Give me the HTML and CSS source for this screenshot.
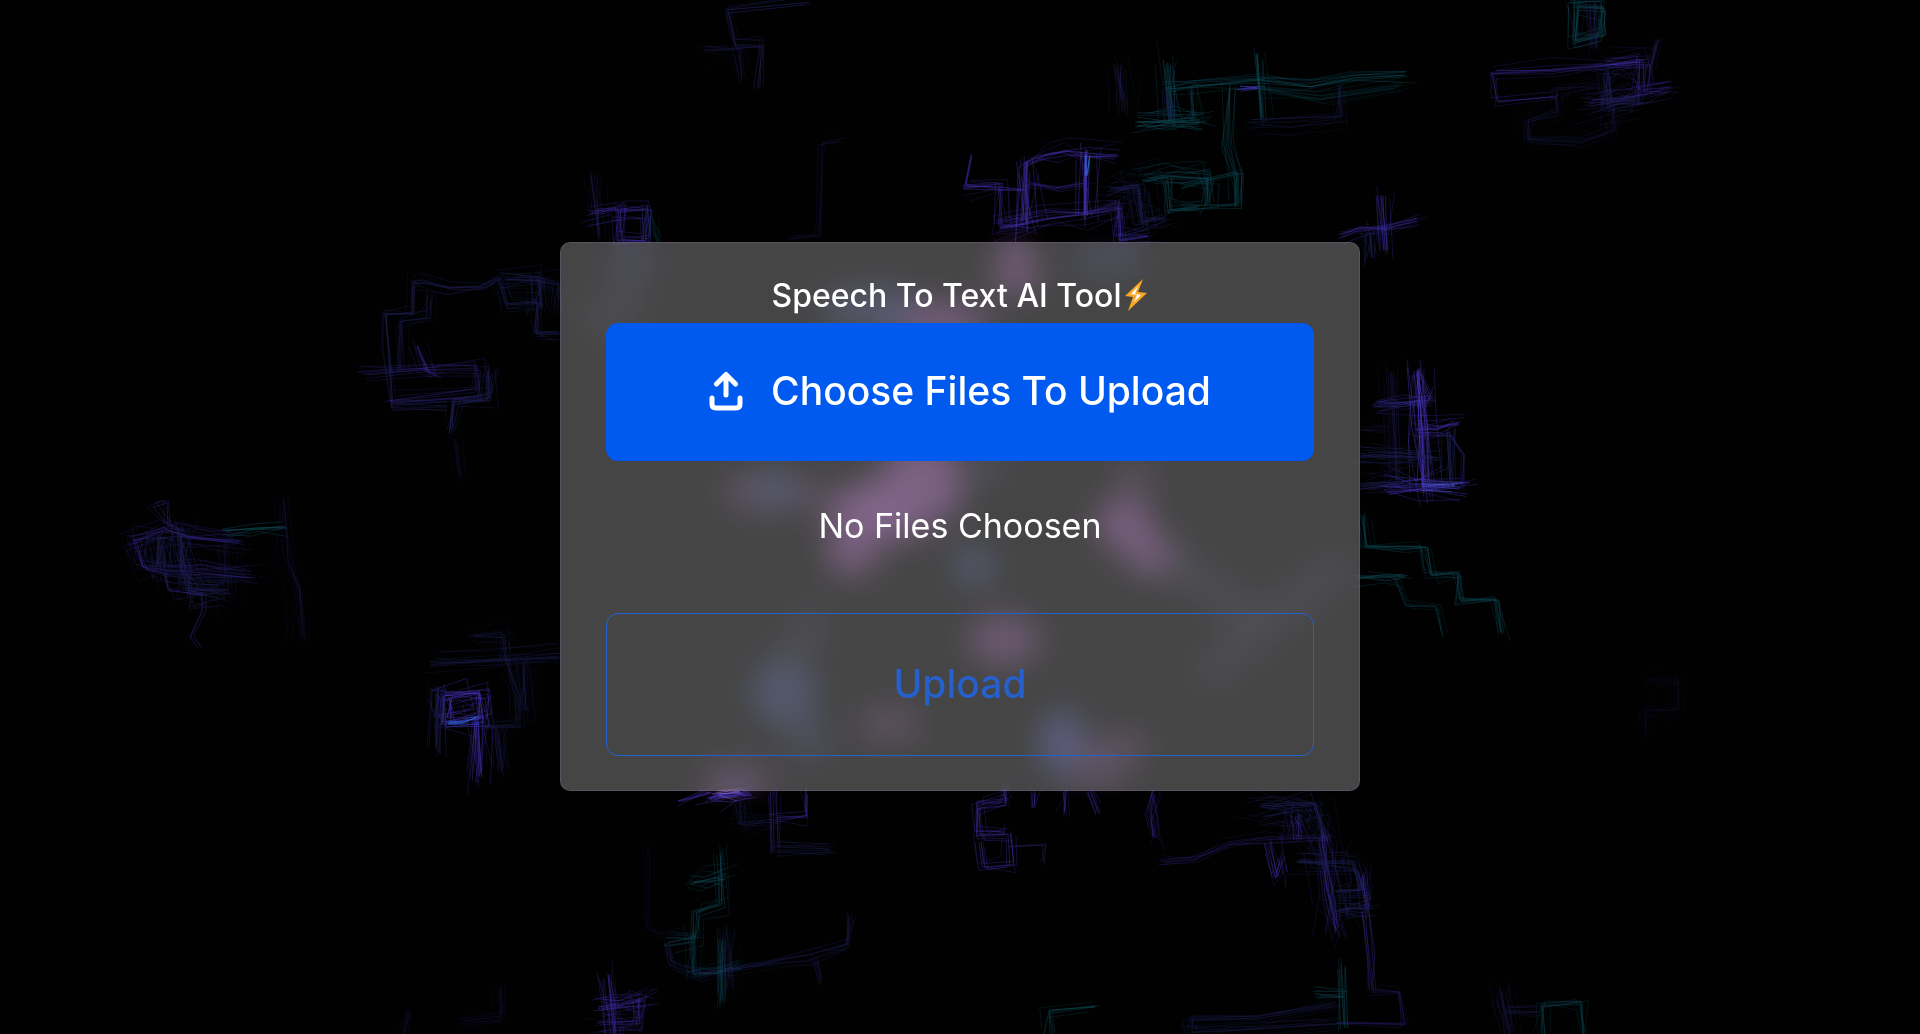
FILE: index.html
```
<!DOCTYPE html>
<html lang="en">

<head>
    <meta charset="UTF-8">
    <meta name="viewport" content="width=device-width, initial-scale=1.0">
    <title>Speech To Text AI Tool</title>
    <link rel="stylesheet" href="styles.css">
</head>

<body>
    <svg class="backdrop" id="backdrop" viewBox="0 0 1920 1034" preserveAspectRatio="xMidYMid slice" aria-hidden="true">
        <g class="glow">
            <g fill="#4c2856">
                <ellipse cx="1016" cy="270" rx="20" ry="26" />
                <ellipse cx="935" cy="322" rx="56" ry="18" />
                <ellipse cx="922" cy="482" rx="42" ry="44" />
                <ellipse cx="880" cy="512" rx="56" ry="30" />
                <ellipse cx="852" cy="550" rx="24" ry="26" />
                <ellipse cx="1124" cy="524" rx="28" ry="24" />
                <ellipse cx="1152" cy="556" rx="26" ry="18" />
                <ellipse cx="770" cy="492" rx="48" ry="18" opacity=".6" />
                <ellipse cx="1134" cy="480" rx="14" ry="24" opacity=".5" />
                <ellipse cx="1004" cy="640" rx="36" ry="24" opacity=".8" />
                <ellipse cx="890" cy="724" rx="32" ry="18" opacity=".5" />
                <ellipse cx="1096" cy="762" rx="36" ry="18" opacity=".6" />
                <ellipse cx="736" cy="778" rx="36" ry="8" />
                <ellipse cx="1128" cy="744" rx="26" ry="14" opacity=".4" />
            </g>
            <g fill="#1a2040">
                <ellipse cx="870" cy="306" rx="48" ry="22" />
                <ellipse cx="772" cy="488" rx="22" ry="20" />
                <ellipse cx="974" cy="566" rx="20" ry="20" />
                <ellipse cx="784" cy="692" rx="32" ry="34" opacity=".9" />
                <ellipse cx="1062" cy="742" rx="22" ry="34" />
                <ellipse cx="810" cy="740" rx="24" ry="22" opacity=".5" />
                <ellipse cx="632" cy="264" rx="28" ry="12" opacity=".6" />
                <ellipse cx="1108" cy="262" rx="38" ry="12" opacity=".7" />
                <ellipse cx="990" cy="466" rx="18" ry="8" />
            </g>
            <g fill="none" stroke="#0d0d15" stroke-width="36">
                <path d="M1170 560L1250 616M1200 680L1345 560M820 610L790 660M590 330L640 290M860 280L870 300" />
            </g>
            <ellipse cx="880" cy="508" rx="26" ry="18" fill="#5c3068" />
            <ellipse cx="1060" cy="744" rx="8" ry="18" fill="#3a2c86" />
        </g>
    </svg>

    <main class="container">
        <form class="card">
            <h1 class="title">Speech To Text AI Tool<svg class="bolt" viewBox="0 0 24 34" aria-hidden="true">
                    <path d="M19 1L1 18L9 19L4 33L23 15L14 14Z" fill="#f9a825" />
                    <path d="M14 8L7 16L13 17L10 24L17 17L11 16Z" fill="#fff" />
                </svg></h1>

            <input type="file" id="file-input" class="file-input" multiple>
            <label for="file-input" class="choose">
                <svg class="upload-icon" viewBox="0 0 34 40" aria-hidden="true">
                    <path d="M17 24V4M7.500 13L17 3.500L26.500 13M3 27V33Q3 37 7 37H27Q31 37 31 33V27" />
                </svg>
                Choose Files To Upload
            </label>

            <p class="files" id="num-of-files">No Files Choosen</p>

            <button type="submit" class="upload">Upload</button>
        </form>
    </main>

    <script src="script.js"></script>
</body>

</html>
```

FILE: styles.css
```
* {
    margin: 0;
    padding: 0;
    box-sizing: border-box;
}

body {
    min-height: 100vh;
    background-color: #010101;
    font-family: "Inter", "Open Sans", sans-serif;
    color: #fff;
    overflow: hidden;
}

.backdrop {
    position: fixed;
    inset: 0;
    width: 100%;
    height: 100%;
}

.glow {
    filter: blur(12px);
}

.sketch {
    fill: none;
    stroke-linejoin: round;
    stroke-width: 1px;
}

.container {
    position: relative;
    min-height: 100vh;
    padding-bottom: 2px;
    display: flex;
    align-items: center;
    justify-content: center;
}

.card {
    width: 100%;
    max-width: 800px;
    padding: 29px 45px 34px;
    background-color: rgba(255, 255, 255, .27);
    border: 1px solid rgba(160, 120, 180, .25);
    border-radius: 10px;
    backdrop-filter: blur(12px);
}

.title {
    display: flex;
    align-items: center;
    justify-content: center;
    height: 51px;
    padding-bottom: 4px;
    font-size: 32px;
    font-weight: 500;
    line-height: 45px;
}

.bolt {
    width: 24px;
    height: 34px;
    margin-left: 3px;
}

.file-input {
    position: absolute;
    width: 1px;
    height: 1px;
    opacity: 0;
}

.choose {
    display: flex;
    align-items: center;
    justify-content: center;
    gap: 28px;
    height: 138px;
    padding-bottom: 2px;
    background-color: #005af0;
    border-radius: 12px;
    font-size: 39px;
    font-weight: 500;
    cursor: pointer;
}

.upload-icon {
    width: 34px;
    height: 40px;
    fill: none;
    stroke: #fff;
    stroke-width: 5px;
    stroke-linecap: round;
    stroke-linejoin: round;
}

.files {
    margin: 41px 0 63px;
    font-size: 34px;
    line-height: 48px;
    text-align: center;
}

.upload {
    display: block;
    width: 100%;
    height: 143px;
    padding-bottom: 2px;
    background-color: transparent;
    border: 1px solid #2560cc;
    border-radius: 12px;
    font-family: inherit;
    font-size: 39px;
    font-weight: 500;
    color: #2560cc;
    cursor: pointer;
}
```

FILE: script.js
```
const backdrop = document.getElementById("backdrop");

const PURPLE = "#4432b4";
const TEAL = "#0e4450";
const NAVY = "#1e1e52";

// [colour, opacity, passes, points]
const lines = [
    // left
    [NAVY, .5, 4, "414,282 422,280 447,287 480,286 498,277 505,304 537,302 535,333 560,332"],
    [NAVY, .5, 3, "414,282 414,313 386,314 388,350 392,407 448,407"],
    [NAVY, .4, 4, "428,296 426,318 400,322 400,372"],
    [PURPLE, .3, 4, "362,374 420,370 478,368 478,396 392,402"],
    [PURPLE, .3, 5, "417,345 428,372 438,376"],
    [NAVY, .6, 5, "488,370 488,398 452,400 450,430"],
    [NAVY, .25, 4, "457,440 460,478"],
    [NAVY, .5, 8, "507,280 540,280 540,308"],
    [NAVY, .3, 8, "536,280 558,284 558,310"],
    [NAVY, .4, 5, "594,175 600,236"],
    [PURPLE, .35, 6, "590,214 618,209 618,241 646,241 646,210 618,211"],
    [TEAL, .3, 5, "648,215 658,241"],
    [PURPLE, .35, 1, "168,525 153,507 167,503 168,525 185,535"],
    [PURPLE, .25, 9, "132,540 165,530 190,536 240,542"],
    [TEAL, .7, 3, "225,531 255,528 286,527"],
    [PURPLE, .25, 8, "134,541 142,566 165,570 200,570 250,575"],
    [NAVY, .5, 12, "160,538 160,565"],
    [NAVY, .5, 14, "180,535 182,568 190,592 222,594"],
    [NAVY, .18, 12, "225,540 228,594"],
    [PURPLE, .35, 1, "164,574 168,590 202,595 202,612 190,638 198,648"],
    [NAVY, .22, 7, "284,500 288,560 300,590 303,640"],
    [PURPLE, .5, 8, "443,696 479,692 480,718 443,724 443,696"],
    [PURPLE, .45, 9, "478,718 479,776"],
    [NAVY, .6, 5, "437,692 438,752"],
    ["#2a6be0", .6, 2, "448,723 462,722 476,718"],
    [NAVY, .4, 6, "430,665 480,661 560,656"],
    [NAVY, .35, 5, "475,636 505,634 506,655 518,695 518,725 480,727"],
    [NAVY, .4, 8, "495,728 500,770"],
    [NAVY, .3, 9, "524,660 524,710"],
    // top
    [NAVY, .5, 3, "810,2 728,10 735,46 762,46 758,88"],
    [NAVY, .3, 5, "704,50 738,48 742,80"],
    [NAVY, .25, 3, "845,138 822,142 820,235 790,237"],
    [PURPLE, .55, 1, "972,155 966,186 1002,187 1024,190"],
    [PURPLE, .35, 4, "966,188 1000,184 1000,226 1028,224"],
    [PURPLE, .5, 9, "1026,164 1026,225"],
    [PURPLE, .4, 5, "1026,162 1045,155 1068,151 1085,153 1118,155"],
    [PURPLE, .6, 7, "1086,154 1086,214"],
    ["#2a78e0", .7, 2, "1086,155 1086,176"],
    [PURPLE, .3, 3, "1030,183 1058,187 1084,183"],
    [PURPLE, .4, 6, "1000,228 1045,218 1087,214 1119,208 1119,240 1148,236"],
    [NAVY, .45, 12, "1110,190 1138,184 1140,222 1165,218"],
    [TEAL, .5, 8, "1167,62 1171,120"],
    [TEAL, .6, 9, "1140,122 1170,121 1200,120"],
    [TEAL, .5, 5, "1165,90 1195,86 1260,80 1310,87 1355,78 1405,75"],
    [TEAL, .35, 4, "1260,88 1320,96 1400,85"],
    [PURPLE, .8, 2, "1240,86 1258,88"],
    [NAVY, .6, 4, "1167,90 1169,118"],
    [TEAL, .5, 5, "1257,54 1262,118"],
    [TEAL, .4, 4, "1192,86 1194,120"],
    [TEAL, .5, 4, "1230,88 1228,145 1237,178 1237,204"],
    [TEAL, .5, 7, "1145,182 1170,176 1208,178 1207,205"],
    [TEAL, .5, 4, "1168,180 1170,210 1200,206"],
    [TEAL, .5, 2, "1180,206 1237,204 1237,172 1207,178 1180,184"],
    [NAVY, .4, 8, "1120,65 1122,110"],
    [NAVY, .35, 5, "1250,122 1290,122 1340,117 1340,85"],
    [PURPLE, .45, 5, "1383,195 1385,250"],
    [PURPLE, .35, 5, "1340,238 1360,230 1385,228 1418,221"],
    [NAVY, .5, 9, "1370,232 1372,258"],
    [TEAL, .6, 5, "1577,6 1605,9 1604,36 1577,42 1577,6"],
    [NAVY, .5, 5, "1590,4 1592,48"],
    [PURPLE, .35, 4, "1494,71 1550,70 1605,65 1640,62"],
    [PURPLE, .35, 2, "1492,72 1497,101 1557,97"],
    [PURPLE, .3, 9, "1607,65 1643,62 1644,92"],
    [PURPLE, .3, 8, "1590,104 1620,99 1645,94 1670,88"],
    [NAVY, .5, 8, "1606,72 1608,106 1640,100"],
    [NAVY, .5, 4, "1658,40 1650,70"],
    [NAVY, .25, 6, "1600,84 1557,90 1557,112 1528,120 1530,140 1580,140 1614,130 1614,106"],
    // right
    [PURPLE, .55, 10, "1418,372 1422,430 1424,488"],
    [PURPLE, .45, 2, "1417,370 1430,400"],
    [PURPLE, .4, 6, "1375,403 1405,402 1430,400"],
    [PURPLE, .4, 6, "1418,430 1438,428 1458,422"],
    [PURPLE, .4, 1, "1420,436 1450,436 1464,455 1462,488"],
    [PURPLE, .5, 9, "1385,487 1420,488 1460,487"],
    ["#5b6cff", .6, 2, "1422,486 1455,486"],
    [NAVY, .6, 7, "1362,457 1400,456 1438,458"],
    [NAVY, .5, 8, "1362,486 1395,484"],
    [NAVY, .35, 7, "1392,372 1398,482"],
    [NAVY, .3, 4, "1362,430 1385,430"],
    [NAVY, .6, 5, "1447,432 1450,486"],
    [TEAL, .5, 4, "1363,515 1366,547 1400,546 1425,547 1430,575 1457,572 1460,600 1495,598 1501,632"],
    [TEAL, .6, 4, "1360,578 1385,577 1405,577"],
    [TEAL, .4, 2, "1395,578 1405,606 1435,606 1442,635"],
    [NAVY, .15, 7, "1645,680 1678,680 1678,710 1645,710 1645,735"],
    // bottom
    [PURPLE, .6, 7, "711,798 730,793 750,792"],
    ["#a078e8", .5, 3, "718,794 740,792"],
    [PURPLE, .5, 2, "678,801 710,792"],
    [PURPLE, .35, 3, "773,790 774,850"],
    [PURPLE, .35, 3, "775,818 807,816 806,790"],
    [NAVY, .3, 8, "740,802 742,825 772,822"],
    [NAVY, .5, 4, "775,847 830,849"],
    [PURPLE, .4, 5, "1006,790 1006,802 979,805 980,835 1008,834"],
    [PURPLE, .4, 3, "1008,834 1010,865 982,867 979,842"],
    [NAVY, .6, 1, "1010,847 1046,845 1044,865"],
    [PURPLE, .5, 2, "1034,790 1035,807"],
    [PURPLE, .35, 3, "1064,790 1064,815"],
    [PURPLE, .4, 3, "1090,790 1098,812"],
    [PURPLE, .3, 5, "1152,790 1149,812 1155,838"],
    [TEAL, .5, 4, "720,852 722,905 697,912 695,938 668,942"],
    [TEAL, .5, 6, "690,882 708,880 725,876"],
    [TEAL, .4, 5, "692,935 693,974 718,973 740,967"],
    [NAVY, .35, 5, "668,942 672,962 700,972 750,965 810,955 848,944 850,915"],
    [TEAL, .5, 5, "722,940 723,1000"],
    [NAVY, .3, 6, "725,930 730,990"],
    [NAVY, .2, 3, "650,845 648,925 660,934 690,932"],
    [NAVY, .4, 3, "817,958 822,980"],
    [PURPLE, .35, 9, "598,1007 620,1005 645,1000"],
    [PURPLE, .35, 7, "608,975 614,1034"],
    [PURPLE, .25, 9, "600,1025 640,1024 640,1000"],
    [NAVY, .2, 6, "460,1024 500,1020 500,990"],
    [NAVY, .4, 2, "404,1034 410,1012"],
    [TEAL, .5, 3, "1050,1034 1049,1010 1095,1007"],
    [PURPLE, .25, 3, "1161,862 1195,860 1230,843 1265,838 1330,838"],
    [PURPLE, .35, 5, "1268,845 1275,878 1280,860"],
    [PURPLE, .35, 8, "1297,816 1300,840"],
    [NAVY, .5, 12, "1260,808 1290,805 1316,806 1325,840"],
    [PURPLE, .3, 11, "1322,840 1330,895 1336,932"],
    [NAVY, .5, 7, "1297,862 1353,864 1360,890 1335,892"],
    [NAVY, .5, 9, "1338,910 1366,908"],
    [PURPLE, .3, 7, "1363,875 1366,910"],
    [PURPLE, .35, 3, "1365,910 1369,960 1372,990"],
    [PURPLE, .25, 2, "1372,990 1400,992 1405,1025 1340,1023"],
    [NAVY, .4, 4, "1340,1023 1240,1030 1192,1032 1192,1020 1260,1018 1338,1006"],
    [TEAL, .6, 3, "1341,965 1344,1026"],
    [TEAL, .5, 4, "1315,997 1345,997"],
    [TEAL, .4, 4, "1542,1034 1541,1003 1580,1001 1583,1034"],
    [NAVY, .4, 7, "1500,990 1510,1034"],
    [NAVY, .4, 4, "1505,1010 1540,1012"]
];

// small seeded generator so the scribble is the same on every load
let seed = 7;
const random = () => {
    seed = (seed * 16807) % 2147483647;
    return seed / 2147483647 - .5;
}

const sketch = (color, opacity, passes, points) => {
    const total = passes * 2 + 1;
    for (let i = 0; i < total; i++) {
        // the first passes stay tight, the later ones drift out and fade
        const spread = i === 0 ? 0 : 4 + i * 1.5;
        const fade = 1 - .5 * i / total;
        const shiftX = random() * spread;
        const shiftY = random() * spread;
        const moved = points.split(" ").map((point) => {
            const [x, y] = point.split(",").map(Number);
            return (x + shiftX + random() * spread * .8) + "," + (y + shiftY + random() * spread * .8);
        });
        const line = document.createElementNS("http://www.w3.org/2000/svg", "polyline");
        line.setAttribute("class", "sketch");
        line.setAttribute("points", moved.join(" "));
        line.setAttribute("stroke", color);
        line.setAttribute("stroke-opacity", opacity * fade);
        backdrop.appendChild(line);
    }
}

lines.forEach((line) => sketch(...line));

// file count
const fileInput = document.getElementById("file-input");
const numOfFiles = document.getElementById("num-of-files");

fileInput.addEventListener("change", () => {
    const count = fileInput.files.length;
    numOfFiles.textContent = count ? count + " Files Selected" : "No Files Choosen";
})
```
